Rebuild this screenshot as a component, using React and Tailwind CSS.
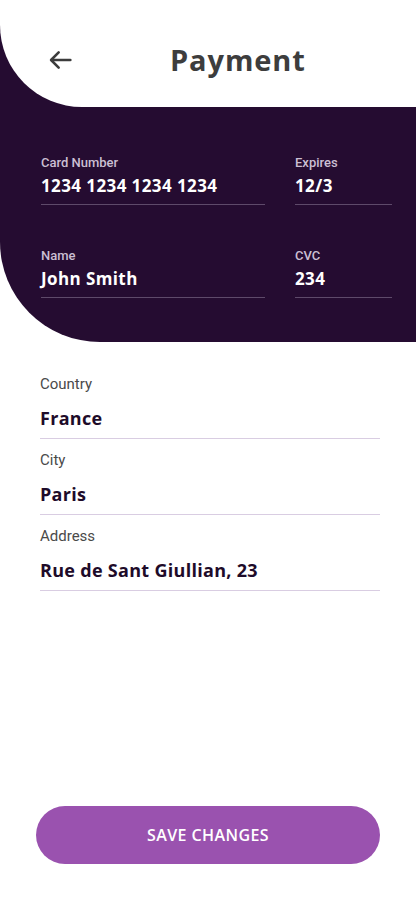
import React from 'react';

const heading = { fontFamily: '"Open Sans", "DejaVu Sans", sans-serif' };
const body = { fontFamily: 'Roboto, "Liberation Sans", sans-serif' };

// card field on the dark panel
const CardField = ({ label, value, className = '' }) => (
  <div className={className}>
    <div className="text-[13px] font-medium leading-4 text-[#cbbfd3]" style={body}>
      {label}
    </div>
    <div className="mt-[5px] text-[17px] font-bold leading-5 tracking-[0.4px] text-white" style={heading}>
      {value}
    </div>
    <div className="mt-[8px] h-px bg-[#5e4a6a]"></div>
  </div>
);

// address field on white
const AddressField = ({ label, value }) => (
  <div className="mb-[11px]">
    <div className="text-[15px] leading-5 text-[#4a4a4a]" style={body}>
      {label}
    </div>
    <div className="mt-[12px] text-[18px] font-bold leading-6 tracking-[0.3px] text-[#1e0b29]" style={heading}>
      {value}
    </div>
    <div className="mt-[8px] h-px bg-[#d9cde2]"></div>
  </div>
);

const App = () => {
  return (
    <div className="flex min-h-[900px] w-[416px] flex-col bg-white">
      <div className="rounded-bl-[100px] bg-[#250c31]">
        <header className="flex h-[107px] items-center rounded-bl-[82px] bg-white pl-[47px] pt-[12px]">
          <svg width="28" height="28" viewBox="0 0 24 24" fill="none" stroke="#3c3c3c" strokeWidth="2.2" strokeLinecap="round" strokeLinejoin="round">
            <path d="M20 12H4" />
            <path d="M10 5.5L3.5 12l6.5 6.5" />
          </svg>
          <h1 className="ml-[95px] text-[29px] font-bold tracking-[0.9px] text-[#3d3d3d]" style={heading}>
            Payment
          </h1>
        </header>
        <div className="px-[41px] pt-[48px] pb-[44px] pr-[24px]">
          <div className="flex gap-[30px]">
            <CardField label="Card Number" value="1234 1234 1234 1234" className="w-[224px]" />
            <CardField label="Expires" value="12/3" className="flex-1" />
          </div>
          <div className="mt-[43px] flex gap-[30px]">
            <CardField label="Name" value="John Smith" className="w-[224px]" />
            <CardField label="CVC" value="234" className="flex-1" />
          </div>
        </div>
      </div>

      <div className="px-[40px] pt-[32px] pr-[36px]">
        <AddressField label="Country" value="France" />
        <AddressField label="City" value="Paris" />
        <AddressField label="Address" value="Rue de Sant Giullian, 23" />
      </div>

      <div className="mt-auto px-[36px] pb-[36px]">
        <button
          className="h-[58px] w-full rounded-full bg-[#9a52af] text-[16px] font-semibold tracking-[0.4px] text-white"
          style={heading}
        >
          SAVE CHANGES
        </button>
      </div>
    </div>
  );
};

export default App;
